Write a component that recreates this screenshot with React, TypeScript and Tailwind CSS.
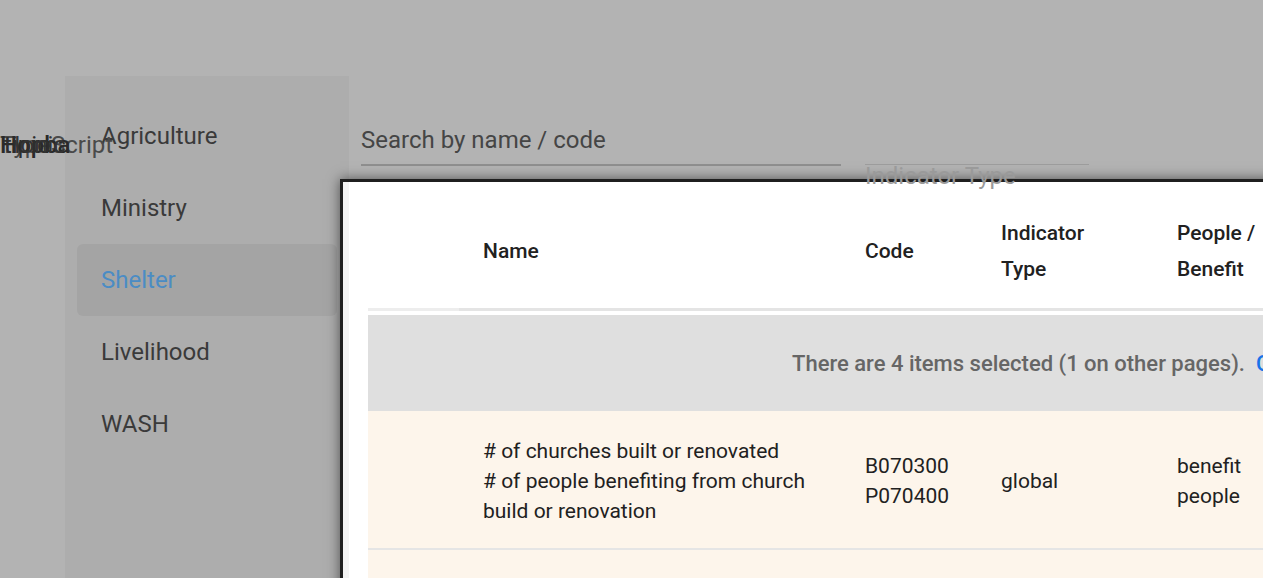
import React from 'react'

const categories = ['Agriculture', 'Ministry', 'Shelter', 'Livelihood', 'WASH']

const Sidebar = (): JSX.Element => (
  <div className="ml-[65px] w-[284px] shrink-0 bg-[#adadad] pt-[24px] px-[12px]">
    {categories.map((c) => (
      <div
        key={c}
        className={
          'h-[72px] flex items-center pl-[24px] rounded-[6px] text-[24px] ' +
          (c === 'Shelter' ? 'bg-[#a4a4a4] text-[#4b8cc4]' : 'text-[#3a3a3a]')
        }
      >
        {c}
      </div>
    ))}
  </div>
)

const Filters = (): JSX.Element => (
  <div className="flex gap-[24px] pl-[12px] pt-[36px]">
    <div className="w-[480px]">
      <div className="h-[52px] pt-[4px] flex items-center text-[24px] text-[#454545]">Search by name / code</div>
      <div className="h-[2px] bg-[#8f8f8f]" />
    </div>
    <div className="relative z-20 w-[224px]">
      <div className="h-[52px]" />
      <div className="h-[1px] bg-[#9c9c9c]" />
      <div className="mt-[-1px] text-[24px] leading-[24px] text-[#9a9a9a]">Indicator Type</div>
    </div>
  </div>
)

const Modal = (): JSX.Element => (
  <div className="absolute left-[340px] top-[179px] z-10 w-[1300px] h-[500px] border-[3px] border-[#1f1f1f] bg-white shadow-[0_0_12px_rgba(0,0,0,0.55)] flex">
    <div className="w-[6px] bg-[#f3f3f3] shrink-0" />
    <div className="pl-[19px] flex-1 text-[21px] text-[#212121]">
      <div className="grid grid-cols-[91px_382px_136px_176px_1fr] h-[126px] pt-[12px] items-center font-medium leading-[36px]">
        <div />
        <div className="pl-[24px]">Name</div>
        <div className="pl-[24px]">Code</div>
        <div className="pl-[24px]">Indicator<br />Type</div>
        <div className="pl-[24px]">People /<br />Benefit</div>
      </div>
      <div className="flex h-[3px]">
        <div className="w-[91px] bg-[#ededed]" />
        <div className="flex-1 bg-[#e4e4e4]" />
      </div>
      <div className="h-[4px]" />
      <div className="h-[96px] bg-[#dfdfdf] flex items-center pl-[424px] whitespace-nowrap font-medium text-[22px] text-[#666666]">
        There are 4 items selected (1 on other pages).
        <span className="ml-[11px] text-[#1a73e8]">Clear selection</span>
      </div>
      <div className="grid grid-cols-[91px_382px_136px_176px_1fr] h-[137px] pt-[2px] items-center bg-[#fdf5eb] leading-[30px]">
        <div />
        <div className="pl-[24px]"># of churches built or renovated<br /># of people benefiting from church build or renovation</div>
        <div className="pl-[24px]">B070300<br />P070400</div>
        <div className="pl-[24px]">global</div>
        <div className="pl-[24px]">benefit<br />people</div>
      </div>
      <div className="h-[2px] bg-[#e5e5e5]" />
      <div className="h-[137px] bg-[#fdf5eb]" />
    </div>
  </div>
)

const App = (): JSX.Element => {
  return (
    <div className="relative w-full h-[578px] overflow-hidden bg-[#b3b3b3] font-['Roboto',sans-serif]">
      <div className="flex pt-[76px] h-full">
        <Sidebar />
        <Filters />
      </div>
      <div className="absolute left-0 top-[129px] h-[32px] w-[120px] text-[24px] leading-[32px] z-0">
        <span className="absolute left-0 text-[#4a4a4a]">TypeScript</span>
        <span className="absolute left-0 text-[#2a2a2a] font-medium">Hopba</span>
        <span className="absolute left-[4px] text-[#2e2e2e]">tipio</span>
        <span className="absolute left-[14px] text-[#333333]">Ionic</span>
      </div>
      <Modal />
    </div>
  )
}

export default App
